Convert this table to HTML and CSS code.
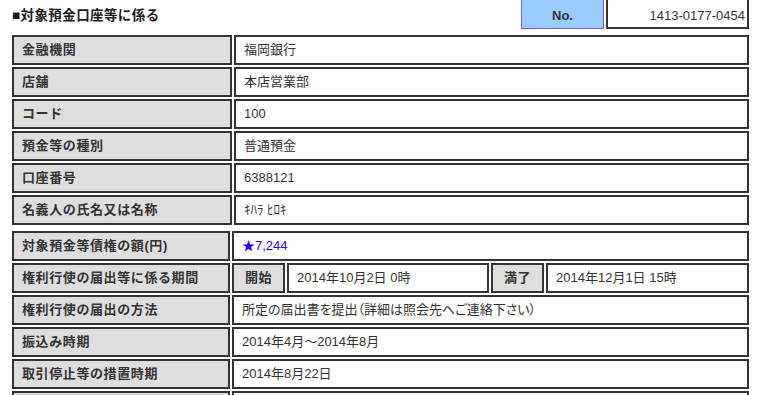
FILE: index.html
```html
<!DOCTYPE html>
<html lang="ja">
<head>
    <meta charset="UTF-8">
    <meta name="viewport" content="width=device-width, initial-scale=1.0">
    <title>対象預金口座等に係る</title>
    <link rel="stylesheet" href="styles.css">
</head>
<body>
    <div class="page">
        <div class="head">
            <h2 class="title">■対象預金口座等に係る</h2>
            <div class="no-box">
                <div class="no-label">No.</div>
                <div class="no-value">1413-0177-0454</div>
            </div>
        </div>

        <!-- 口座情報 -->
        <table class="info info-account">
            <colgroup>
                <col class="col-label">
                <col>
            </colgroup>
            <tr><th>金融機関</th><td>福岡銀行</td></tr>
            <tr><th>店舗</th><td>本店営業部</td></tr>
            <tr><th>コード</th><td>100</td></tr>
            <tr><th>預金等の種別</th><td>普通預金</td></tr>
            <tr><th>口座番号</th><td>6388121</td></tr>
            <tr><th>名義人の氏名又は名称</th><td>ｷﾊﾗ ﾋﾛｷ</td></tr>
        </table>

        <!-- 債権・手続き情報 -->
        <table class="info info-claim">
            <colgroup>
                <col class="col-label2">
                <col class="col-tag">
                <col class="col-date">
                <col class="col-tag">
                <col>
            </colgroup>
            <tr><th>対象預金等債権の額(円)</th><td colspan="4" class="amount">★7,244</td></tr>
            <tr>
                <th>権利行使の届出等に係る期間</th>
                <th class="tag">開始</th>
                <td>2014年10月2日 0時</td>
                <th class="tag">満了</th>
                <td>2014年12月1日 15時</td>
            </tr>
            <tr><th>権利行使の届出の方法</th><td colspan="4" class="method">所定の届出書を提出（詳細は照会先へご連絡下さい）</td></tr>
            <tr><th>振込み時期</th><td colspan="4">2014年4月～2014年8月</td></tr>
            <tr><th>取引停止等の措置時期</th><td colspan="4">2014年8月22日</td></tr>
            <tr><th>&nbsp;</th><td colspan="4">&nbsp;</td></tr>
        </table>
    </div>
</body>
</html>
```

FILE: styles.css
```css
body {
    margin: 0;
    font-family: 'Liberation Sans', 'Noto Sans CJK JP', sans-serif;
    font-size: 13px;
    color: #333;
    background: #fff;
}
.page {
    padding: 0 10px;
    width: 741px;
}
.head {
    display: flex;
    align-items: center;
    justify-content: space-between;
    margin-top: -2px;
    margin-bottom: 4px;
    height: 31px;
}
.title {
    margin: 0 0 0 2px;
    font-size: 13.5px;
    font-weight: bold;
    color: #1a1a1a;
    letter-spacing: 0.4px;
}
.no-box {
    display: flex;
    gap: 2px;
    height: 31px;
    margin-right: 2px;
}
.no-label {
    width: 83px;
    box-sizing: border-box;
    border: 1px solid #7b4dff;
    background: #99ccff;
    font-weight: bold;
    display: flex;
    align-items: center;
    justify-content: center;
    padding-top: 3px;
}
.no-value {
    width: 143px;
    box-sizing: border-box;
    border: 2px solid #333;
    display: flex;
    align-items: center;
    justify-content: flex-end;
    padding: 3px 2px 0 0;
}
.info {
    width: 741px;
    table-layout: fixed;
    border-collapse: separate;
    border-spacing: 2px;
}
.info-claim {
    margin-top: 2px;
}
.info tr {
    height: 30px;
}
.col-label { width: 220px; }
.col-label2 { width: 218px; }
.col-tag { width: 53px; }
.col-date { width: 202px; }
.info th,
.info td {
    box-sizing: border-box;
    height: 30px;
    line-height: 16px;
    border: 2px solid #333;
    padding: 0 8px;
    text-align: left;
    vertical-align: middle;
    white-space: nowrap;
    overflow: hidden;
}
.info th {
    background: #dedede;
    font-weight: bold;
    letter-spacing: 0.6px;
}
.info th.tag {
    text-align: center;
    padding: 0;
}
.amount {
    color: #2200ff;
}
.method {
    font-feature-settings: "palt";
}
```
